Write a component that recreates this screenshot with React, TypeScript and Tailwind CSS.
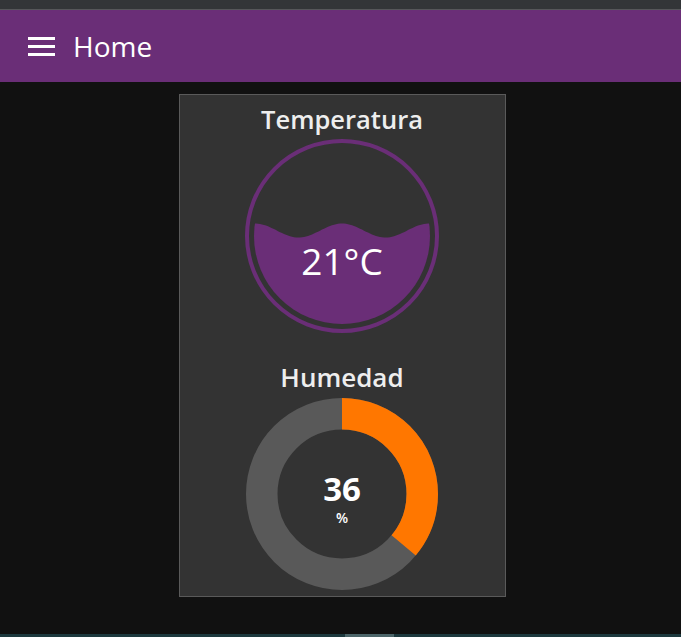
const wavePath = () => {
  // wave surface inside the temperature gauge (svg coords, centre 100,100)
  const pts: string[] = [];
  for (let x = 8; x <= 192; x += 2) {
    const y = 100 - 5.5 - 7 * Math.cos((2 * Math.PI * (x - 100)) / 87);
    pts.push(`${x},${y.toFixed(2)}`);
  }
  return `M${pts.join(' L')} L192,200 L8,200 Z`;
};

const TempGauge = () => (
  <svg width="200" height="200" viewBox="0 0 200 200" className="block">
    <defs>
      <clipPath id="inner">
        <circle cx="100" cy="100" r="88" />
      </clipPath>
    </defs>
    <circle cx="100" cy="100" r="95" fill="none" stroke="#6a2e77" strokeWidth="4" />
    <path d={wavePath()} fill="#6a2e77" clipPath="url(#inner)" />
    <text
      x="100"
      y="139"
      textAnchor="middle"
      fill="#ffffff"
      fontSize="37"
      fontFamily="'Open Sans', sans-serif">
      21°C
    </text>
  </svg>
);

const HumGauge = () => {
  const r = 80.25;
  const c = 2 * Math.PI * r;
  const pct = 36;
  return (
    <svg width="200" height="200" viewBox="0 0 200 200" className="block">
      <circle cx="100" cy="100" r={r} fill="none" stroke="#595959" strokeWidth="31.5" />
      <circle
        cx="100"
        cy="100"
        r={r}
        fill="none"
        stroke="#ff7700"
        strokeWidth="31.5"
        strokeDasharray={`${(c * pct) / 100} ${c}`}
        transform="rotate(-90 100 100)"
      />
      <text
        x="100"
        y="107"
        textAnchor="middle"
        fill="#ffffff"
        fontSize="33"
        fontWeight="700"
        fontFamily="'Open Sans', sans-serif">
        {pct}
      </text>
      <text
        x="100"
        y="129"
        textAnchor="middle"
        fill="#ffffff"
        fontSize="14"
        fontWeight="600"
        fontFamily="'Open Sans', sans-serif">
        %
      </text>
    </svg>
  );
};

export default function App() {
  return (
    <div className="flex h-[637px] w-full flex-col bg-[#111111] font-['Open_Sans',sans-serif]">
      {/* browser strip */}
      <div className="h-[10px] border-b border-[#56575a] bg-[#333538]" />

      {/* toolbar */}
      <div className="flex h-[72px] items-center bg-[#6a2e77] pl-[28px] text-white">
        <div className="flex w-[27px] flex-col gap-[5px]">
          <span className="h-[3px] w-full bg-white" />
          <span className="h-[3px] w-full bg-white" />
          <span className="h-[3px] w-full bg-white" />
        </div>
        <h1 className="ml-[18px] text-[28px] leading-none">Home</h1>
      </div>

      {/* content */}
      <div className="flex flex-1 justify-center pt-[12px]">
        <div className="ml-[3px] flex h-[503px] w-[327px] flex-col items-center border border-[#5a5a5a] bg-[#333333] pt-[7px]">
          <h2 className="flex h-[34px] items-center text-[25.5px] font-semibold text-[#eeeeee]">Temperatura</h2>
          <TempGauge />
          <h2 className="mt-[24px] flex h-[34px] items-center text-[26px] font-semibold text-[#eeeeee]">Humedad</h2>
          <HumGauge />
        </div>
      </div>

      {/* bottom strip */}
      <div className="flex h-[3px] bg-[#1d393e]">
        <span className="ml-[345px] h-full w-[49px] bg-[#4c6569]" />
      </div>
    </div>
  );
}
